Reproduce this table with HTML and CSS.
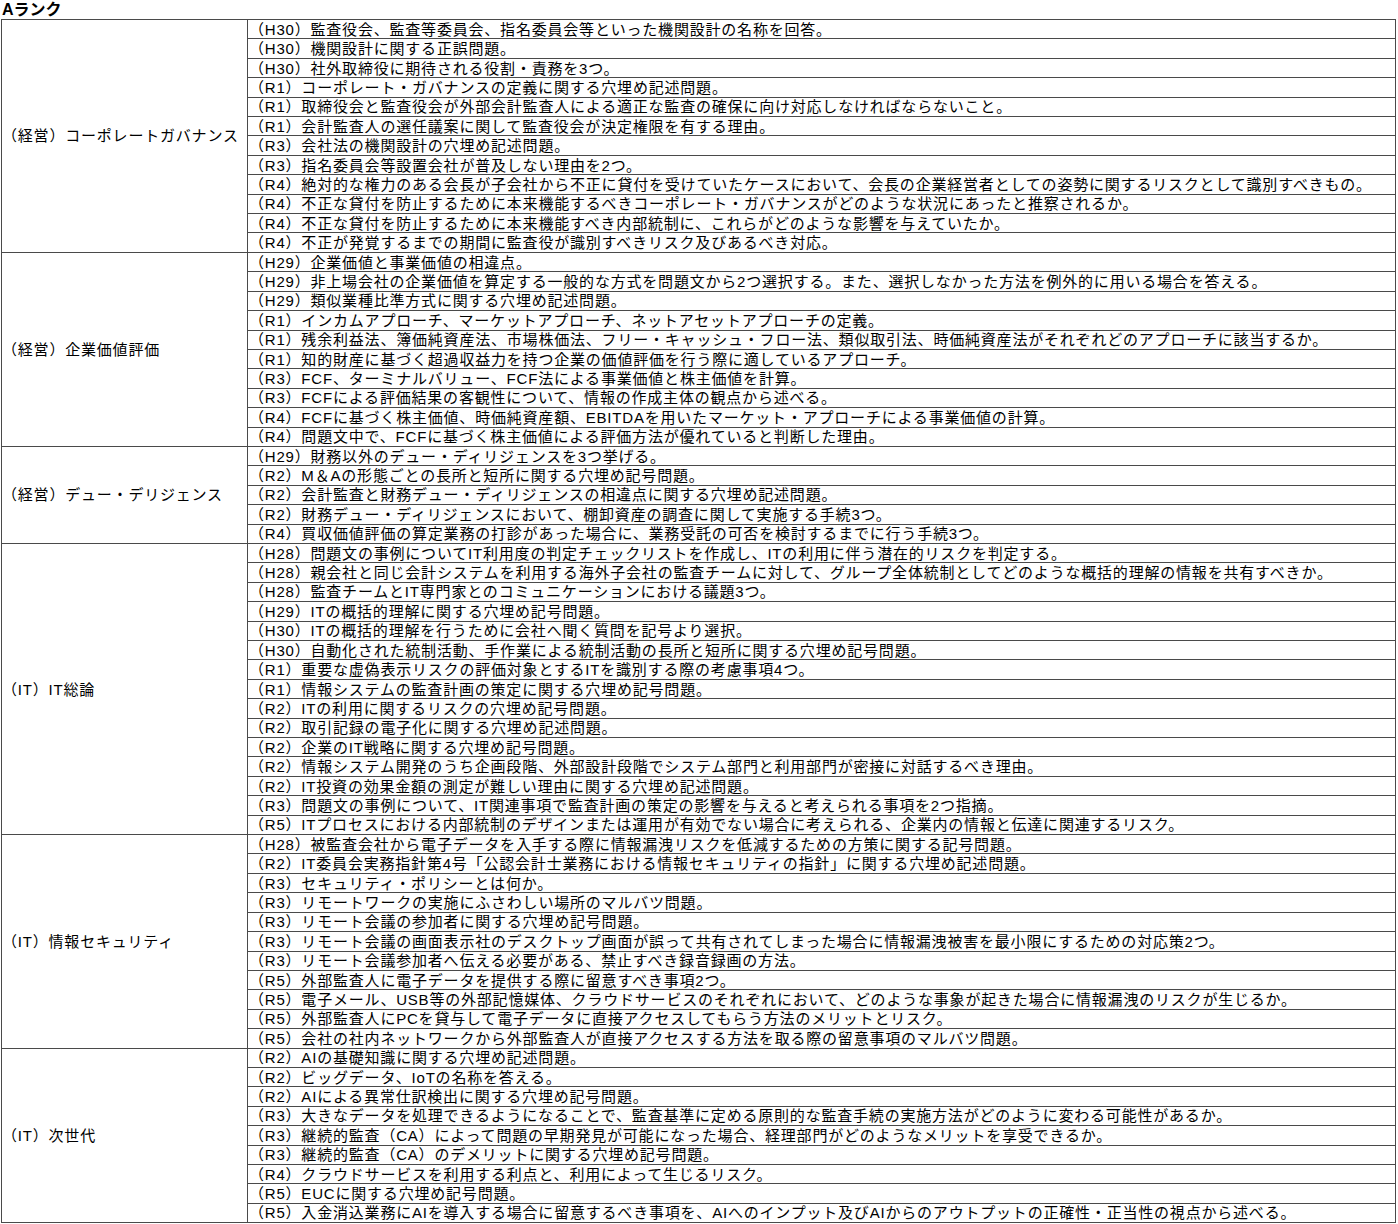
FILE: index.html
```html
<!DOCTYPE html>
<html lang="ja">
<head>
<meta charset="utf-8">
<title>Aランク</title>
<link rel="stylesheet" href="styles.css">
</head>
<body>
<div class="title">Aランク</div>
<table class="rank">
<tbody>
<tr><td class="cat" rowspan="12">（経営）コーポレートガバナンス</td><td>（H30）監査役会、監査等委員会、指名委員会等といった機関設計の名称を回答。</td></tr>
<tr><td>（H30）機関設計に関する正誤問題。</td></tr>
<tr><td>（H30）社外取締役に期待される役割・責務を3つ。</td></tr>
<tr><td>（R1）コーポレート・ガバナンスの定義に関する穴埋め記述問題。</td></tr>
<tr><td>（R1）取締役会と監査役会が外部会計監査人による適正な監査の確保に向け対応しなければならないこと。</td></tr>
<tr><td>（R1）会計監査人の選任議案に関して監査役会が決定権限を有する理由。</td></tr>
<tr><td>（R3）会社法の機関設計の穴埋め記述問題。</td></tr>
<tr><td>（R3）指名委員会等設置会社が普及しない理由を2つ。</td></tr>
<tr><td>（R4）絶対的な権力のある会長が子会社から不正に貸付を受けていたケースにおいて、会長の企業経営者としての姿勢に関するリスクとして識別すべきもの。</td></tr>
<tr><td>（R4）不正な貸付を防止するために本来機能するべきコーポレート・ガバナンスがどのような状況にあったと推察されるか。</td></tr>
<tr><td>（R4）不正な貸付を防止するために本来機能すべき内部統制に、これらがどのような影響を与えていたか。</td></tr>
<tr><td>（R4）不正が発覚するまでの期間に監査役が識別すべきリスク及びあるべき対応。</td></tr>

<tr><td class="cat" rowspan="10">（経営）企業価値評価</td><td>（H29）企業価値と事業価値の相違点。</td></tr>
<tr><td>（H29）非上場会社の企業価値を算定する一般的な方式を問題文から2つ選択する。また、選択しなかった方法を例外的に用いる場合を答える。</td></tr>
<tr><td>（H29）類似業種比準方式に関する穴埋め記述問題。</td></tr>
<tr><td>（R1）インカムアプローチ、マーケットアプローチ、ネットアセットアプローチの定義。</td></tr>
<tr><td>（R1）残余利益法、簿価純資産法、市場株価法、フリー・キャッシュ・フロー法、類似取引法、時価純資産法がそれぞれどのアプローチに該当するか。</td></tr>
<tr><td>（R1）知的財産に基づく超過収益力を持つ企業の価値評価を行う際に適しているアプローチ。</td></tr>
<tr><td>（R3）FCF、ターミナルバリュー、FCF法による事業価値と株主価値を計算。</td></tr>
<tr><td>（R3）FCFによる評価結果の客観性について、情報の作成主体の観点から述べる。</td></tr>
<tr><td>（R4）FCFに基づく株主価値、時価純資産額、EBITDAを用いたマーケット・アプローチによる事業価値の計算。</td></tr>
<tr><td>（R4）問題文中で、FCFに基づく株主価値による評価方法が優れていると判断した理由。</td></tr>

<tr><td class="cat" rowspan="5">（経営）デュー・デリジェンス</td><td>（H29）財務以外のデュー・ディリジェンスを3つ挙げる。</td></tr>
<tr><td>（R2）M＆Aの形態ごとの長所と短所に関する穴埋め記号問題。</td></tr>
<tr><td>（R2）会計監査と財務デュー・ディリジェンスの相違点に関する穴埋め記述問題。</td></tr>
<tr><td>（R2）財務デュー・ディリジェンスにおいて、棚卸資産の調査に関して実施する手続3つ。</td></tr>
<tr><td>（R4）買収価値評価の算定業務の打診があった場合に、業務受託の可否を検討するまでに行う手続3つ。</td></tr>

<tr><td class="cat" rowspan="15">（IT）IT総論</td><td>（H28）問題文の事例についてIT利用度の判定チェックリストを作成し、ITの利用に伴う潜在的リスクを判定する。</td></tr>
<tr><td>（H28）親会社と同じ会計システムを利用する海外子会社の監査チームに対して、グループ全体統制としてどのような概括的理解の情報を共有すべきか。</td></tr>
<tr><td>（H28）監査チームとIT専門家とのコミュニケーションにおける議題3つ。</td></tr>
<tr><td>（H29）ITの概括的理解に関する穴埋め記号問題。</td></tr>
<tr><td>（H30）ITの概括的理解を行うために会社へ聞く質問を記号より選択。</td></tr>
<tr><td>（H30）自動化された統制活動、手作業による統制活動の長所と短所に関する穴埋め記号問題。</td></tr>
<tr><td>（R1）重要な虚偽表示リスクの評価対象とするITを識別する際の考慮事項4つ。</td></tr>
<tr><td>（R1）情報システムの監査計画の策定に関する穴埋め記号問題。</td></tr>
<tr><td>（R2）ITの利用に関するリスクの穴埋め記号問題。</td></tr>
<tr><td>（R2）取引記録の電子化に関する穴埋め記述問題。</td></tr>
<tr><td>（R2）企業のIT戦略に関する穴埋め記号問題。</td></tr>
<tr><td>（R2）情報システム開発のうち企画段階、外部設計段階でシステム部門と利用部門が密接に対話するべき理由。</td></tr>
<tr><td>（R2）IT投資の効果金額の測定が難しい理由に関する穴埋め記述問題。</td></tr>
<tr><td>（R3）問題文の事例について、IT関連事項で監査計画の策定の影響を与えると考えられる事項を2つ指摘。</td></tr>
<tr><td>（R5）ITプロセスにおける内部統制のデザインまたは運用が有効でない場合に考えられる、企業内の情報と伝達に関連するリスク。</td></tr>

<tr><td class="cat" rowspan="11">（IT）情報セキュリティ</td><td>（H28）被監査会社から電子データを入手する際に情報漏洩リスクを低減するための方策に関する記号問題。</td></tr>
<tr><td>（R2）IT委員会実務指針第4号「公認会計士業務における情報セキュリティの指針」に関する穴埋め記述問題。</td></tr>
<tr><td>（R3）セキュリティ・ポリシーとは何か。</td></tr>
<tr><td>（R3）リモートワークの実施にふさわしい場所のマルバツ問題。</td></tr>
<tr><td>（R3）リモート会議の参加者に関する穴埋め記号問題。</td></tr>
<tr><td>（R3）リモート会議の画面表示社のデスクトップ画面が誤って共有されてしまった場合に情報漏洩被害を最小限にするための対応策2つ。</td></tr>
<tr><td>（R3）リモート会議参加者へ伝える必要がある、禁止すべき録音録画の方法。</td></tr>
<tr><td>（R5）外部監査人に電子データを提供する際に留意すべき事項2つ。</td></tr>
<tr><td>（R5）電子メール、USB等の外部記憶媒体、クラウドサービスのそれぞれにおいて、どのような事象が起きた場合に情報漏洩のリスクが生じるか。</td></tr>
<tr><td>（R5）外部監査人にPCを貸与して電子データに直接アクセスしてもらう方法のメリットとリスク。</td></tr>
<tr><td>（R5）会社の社内ネットワークから外部監査人が直接アクセスする方法を取る際の留意事項のマルバツ問題。</td></tr>

<tr><td class="cat" rowspan="9">（IT）次世代</td><td>（R2）AIの基礎知識に関する穴埋め記述問題。</td></tr>
<tr><td>（R2）ビッグデータ、IoTの名称を答える。</td></tr>
<tr><td>（R2）AIによる異常仕訳検出に関する穴埋め記号問題。</td></tr>
<tr><td>（R3）大きなデータを処理できるようになることで、監査基準に定める原則的な監査手続の実施方法がどのように変わる可能性があるか。</td></tr>
<tr><td>（R3）継続的監査（CA）によって問題の早期発見が可能になった場合、経理部門がどのようなメリットを享受できるか。</td></tr>
<tr><td>（R3）継続的監査（CA）のデメリットに関する穴埋め記号問題。</td></tr>
<tr><td>（R4）クラウドサービスを利用する利点と、利用によって生じるリスク。</td></tr>
<tr><td>（R5）EUCに関する穴埋め記号問題。</td></tr>
<tr><td>（R5）入金消込業務にAIを導入する場合に留意するべき事項を、AIへのインプット及びAIからのアウトプットの正確性・正当性の視点から述べる。</td></tr>
</tbody>
</table>
</body>
</html>
```
FILE: styles.css
```css
html, body {
  margin: 0;
  padding: 0;
  background: #ffffff;
}

body {
  font-family: "Liberation Sans", "Noto Sans CJK JP", sans-serif;
  color: #000000;
}

.title {
  font-size: 16px;
  font-weight: bold;
  line-height: 19px;
  height: 19px;
  padding-left: 2px;
}

.rank {
  border-collapse: collapse;
  margin-left: 1px;
  width: 1395px;
  table-layout: fixed;
  font-size: 15px;
  letter-spacing: 0.8px;
  line-height: 17px;
}

.rank tr {
  height: 19.41px;
}

.rank td {
  border: 1px solid #4a4a4a;
  padding: 0 0 0 1px;
  white-space: nowrap;
  overflow: hidden;
  vertical-align: middle;
}

.rank td.cat {
  width: 245px;
  padding-left: 0;
}
```
